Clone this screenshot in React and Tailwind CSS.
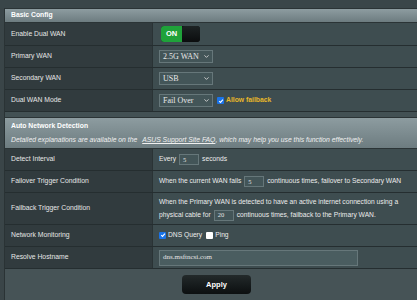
import { ChevronDown } from "lucide-react";

const font = { fontFamily: '"Liberation Sans", Arial, sans-serif' };

function FakeSelect({ value, width = "w-[54px]" }) {
  return (
    <div className={`${width} h-[13px] flex items-center justify-between border border-[#66777a] bg-[#435558] pl-[3px] pr-[2px] text-[8px] text-[#e8e8e8] [font-family:'Liberation_Serif',serif]`}>
      <span>{value}</span>
      <ChevronDown size={7} strokeWidth={3} className="text-[#d8d8d8]" />
    </div>
  );
}

function Box({ value, w = "w-[20px]" }) {
  return (
    <span className={`inline-flex items-center ${w} h-[11px] border border-[#66777a] bg-[#435558] px-[3px] text-[6.5px] [font-family:'Liberation_Serif',serif] text-[#e4e4e4] mx-[3px]`}>
      {value}
    </span>
  );
}

function Row({ label, children, h = "h-[22px]" }) {
  return (
    <div className={`flex ${h} border-b border-[#252e30]`}>
      <div className="w-[148px] shrink-0 bg-[#313b3e] border-r border-[#2a3335] flex items-center pl-[6px] text-[6.8px] text-[#e6e6e6]">
        {label}
      </div>
      <div className="flex-1 bg-[#3e4d50] flex items-center pl-[6px] text-[6.7px] text-[#ececec]">
        {children}
      </div>
    </div>
  );
}

function Header({ children }) {
  return (
    <div className="bg-gradient-to-b from-[#8d9ca0] to-[#6d7c80] border-y border-[#2b3436] pl-[6px] text-[6.8px] text-white">
      {children}
    </div>
  );
}

function Check({ on }) {
  return on ? (
    <span className="inline-flex items-center justify-center w-[7px] h-[7px] rounded-[1px] bg-[#1a73e8] mr-[2px]">
      <svg viewBox="0 0 10 10" width="6" height="6"><path d="M2 5.2 L4.2 7.4 L8.2 2.6" stroke="white" strokeWidth="1.8" fill="none" /></svg>
    </span>
  ) : (
    <span className="inline-block w-[7px] h-[7px] rounded-[1px] bg-white mr-[2px]" />
  );
}

export default function App() {
  return (
    <div style={font} className="w-[417px] h-[300px] overflow-hidden bg-[#465356] flex flex-col">
      <div className="h-[8px] bg-[#3a4649] shrink-0" />
      <div className="flex flex-1">
        <div className="w-[5px] shrink-0 bg-[#3a4548] border-r border-[#2a3335]" />
        <div className="flex-1 flex flex-col">
          <Header>
            <div className="h-[13px] flex items-center font-bold">Basic Config</div>
          </Header>
          <Row label="Enable Dual WAN" h="h-[23px]">
            <div className="flex w-[39px] h-[16px] rounded-[3px] overflow-hidden bg-[#0f1213] ml-[2px]">
              <div className="w-[21px] bg-[#1fa23a] flex items-center justify-center text-white font-bold text-[7.5px]">ON</div>
              <div className="flex-1 rounded-[3px] bg-gradient-to-b from-[#1d2324] to-[#0b0d0e]" />
            </div>
          </Row>
          <Row label="Primary WAN">
            <FakeSelect value="2.5G WAN" />
          </Row>
          <Row label="Secondary WAN">
            <FakeSelect value="USB" />
          </Row>
          <Row label="Dual WAN Mode">
            <FakeSelect value="Fail Over" />
            <span className="ml-[4px] flex items-center text-[#e8b82a] font-bold text-[6.8px]">
              <Check on />
              Allow failback
            </span>
          </Row>
          <div className="h-[5px] bg-[#435154]" />
          <Header>
            <div className="h-[15px] flex items-end pb-[2px] font-bold">Auto Network Detection</div>
            <div className="h-[15px] flex items-center italic text-[6.8px] text-[#f0f0f0]">
              Detailed explanations are available on the
              <span className="underline ml-[5px]">ASUS Support Site FAQ</span>
              , which may help you use this function effectively.
            </div>
          </Header>
          <Row label="Detect Interval">
            Every <Box value="5" /> seconds
          </Row>
          <Row label="Failover Trigger Condition">
            When the current WAN fails <Box value="5" /> continuous times, failover to Secondary WAN
          </Row>
          <Row label="Failback Trigger Condition" h="h-[32px]">
            <div className="flex flex-col gap-[3px] leading-[10px]">
              <span>When the Primary WAN is detected to have an active internet connection using a</span>
              <span className="flex items-center">physical cable for <Box value="20" /> continuous times, failback to the Primary WAN.</span>
            </div>
          </Row>
          <Row label="Network Monitoring">
            <span className="flex items-center"><Check on />DNS Query</span>
            <span className="flex items-center ml-[4px]"><Check />Ping</span>
          </Row>
          <Row label="Resolve Hostname">
            <div className="w-[199px] h-[16px] flex items-center border border-[#66777a] bg-[#4a5d60] pl-[3px] text-[7px] [font-family:'Liberation_Serif',serif] text-[#e4e4e4]">
              dns.msftncsi.com
            </div>
          </Row>
          <div className="flex justify-center pt-[6px]">
            <div className="w-[69px] h-[19px] rounded-[4px] bg-gradient-to-b from-[#232a2b] to-[#0c0f10] flex items-center justify-center text-white font-bold text-[7.5px] ml-[11px]">
              Apply
            </div>
          </div>
        </div>
      </div>
    </div>
  );
}
